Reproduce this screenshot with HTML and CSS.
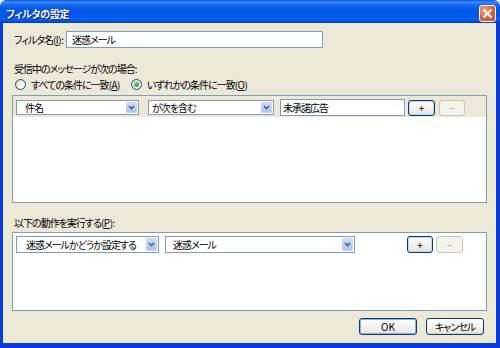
FILE: index.html
```html
<!DOCTYPE html>
<html lang="ja">
<head>
<meta charset="utf-8">
<title>フィルタの設定</title>
<link rel="stylesheet" href="styles.css">
</head>
<body>
<div class="window">
  <div class="titlebar">
    <span class="title">フィルタの設定</span>
    <span class="close"><svg width="9" height="9" viewBox="0 0 9 9"><path d="M1 1 L8 8 M8 1 L1 8" stroke="#fff" stroke-width="2" stroke-linecap="square"/></svg></span>
  </div>
  <div class="frame">
    <div class="client">
      <div class="name-row">
        <span class="name-lbl">フィルタ名<span class="ak">(<u>I</u>):</span></span>
        <div class="textbox name-box">迷惑メール</div>
      </div>
      <div class="lbl lbl1">受信中のメッセージが次の場合:</div>
      <div class="radios">
        <div class="radio r1"><span class="rb"></span><span>すべての条件に一致<span class="ak">(<u>A</u>)</span></span></div>
        <div class="radio"><span class="rb on"><span class="dot"></span></span><span>いずれかの条件に一致<span class="ak">(<u>O</u>)</span></span></div>
      </div>
      <div class="panel panel1">
        <div class="head">
          <div class="sel s11"><span class="txt">件名</span><span class="dd"><svg width="7" height="5" viewBox="0 0 7 5"><path d="M1 1 L3.5 3.5 L6 1" stroke="#4D6185" stroke-width="1.6" fill="none"/></svg></span></div>
          <div class="sel s12"><span class="txt">が次を含む</span><span class="dd"><svg width="7" height="5" viewBox="0 0 7 5"><path d="M1 1 L3.5 3.5 L6 1" stroke="#4D6185" stroke-width="1.6" fill="none"/></svg></span></div>
          <div class="textbox val-box">未承諾広告</div>
          <div class="btn small def p1">+</div>
          <div class="btn small dis">−</div>
        </div>
      </div>
      <div class="lbl lbl2">以下の動作を実行する<span class="ak">(<u>P</u>):</span></div>
      <div class="panel panel2">
        <div class="row">
          <div class="sel s21"><span class="txt">迷惑メールかどうか設定する</span><span class="dd"><svg width="7" height="5" viewBox="0 0 7 5"><path d="M1 1 L3.5 3.5 L6 1" stroke="#4D6185" stroke-width="1.6" fill="none"/></svg></span></div>
          <div class="sel s22"><span class="txt">迷惑メール</span><span class="dd"><svg width="7" height="5" viewBox="0 0 7 5"><path d="M1 1 L3.5 3.5 L6 1" stroke="#4D6185" stroke-width="1.6" fill="none"/></svg></span></div>
          <div class="btn small def p2">+</div>
          <div class="btn small dis m2">−</div>
        </div>
      </div>
      <div class="footer">
        <div class="btn big def ok">OK</div>
        <div class="btn big">キャンセル</div>
      </div>
    </div>
  </div>
</div>
</body>
</html>
```

FILE: styles.css
```css
* { box-sizing: border-box; margin: 0; padding: 0; }
html, body { width: 500px; height: 348px; overflow: hidden; background: #fff; }
body {
  font-family: "Noto Sans CJK JP", "Noto Sans", sans-serif;
  font-size: 10px;
  line-height: 12px;
  letter-spacing: -1px;
  font-feature-settings: "palt";
  color: #000;
  white-space: nowrap;
}
u { text-decoration: underline; text-underline-offset: 1px; }
.ak { letter-spacing: -0.5px; }

.window { width: 500px; height: 348px; display: flex; flex-direction: column; }

.titlebar {
  height: 23px;
  flex: none;
  display: flex;
  align-items: flex-start;
  justify-content: space-between;
  padding: 5px 4px 0 6px;
  border-radius: 6px 6px 0 0;
  background: linear-gradient(to bottom, #0A4FD8 0px, #3D8BFA 2px, #1767F0 5px, #0056E6 10px, #0057EA 16px, #0A63F2 19px, #0049D2 22px, #003EC0 23px);
}
.title {
  color: #fff;
  font-weight: bold;
  font-size: 10px;
  letter-spacing: -0.3px;
  line-height: 13px;
  margin-top: 2px;
  text-shadow: 1px 1px 0 #0A1E8C;
}
.close {
  width: 17px;
  height: 17px;
  border: 1px solid #fff;
  border-radius: 3px;
  background: radial-gradient(circle at 30% 30%, #F0A58A 0%, #E2683F 45%, #C8401B 100%);
  display: flex;
  align-items: center;
  justify-content: center;
}

.frame {
  flex: 1;
  display: flex;
  border-left: 3px solid #0A3EDC;
  border-right: 4px solid #0A3EDC;
  border-bottom: 5px solid #0A3EDC;
}
.client {
  flex: 1;
  background: #ECE9D8;
  padding: 8px 9px 0 9px;
  display: flex;
  flex-direction: column;
}

.name-row { display: flex; align-items: center; height: 17px; padding-left: 2px; }
.name-lbl { width: 52px; }
.textbox {
  height: 17px;
  border: 1px solid #7F9DB9;
  background: #fff;
  line-height: 15px;
}
.name-box { width: 257px; padding-left: 5px; }

.lbl { padding-left: 2px; height: 12px; }
.lbl1 { margin-top: 15px; }
.lbl2 { margin-top: 14px; }

.radios { margin-top: 3px; height: 13px; display: flex; align-items: center; padding-left: 3px; }
.radio { display: flex; align-items: center; gap: 5px; }
.r1 { width: 116px; }
.rb {
  width: 11px;
  height: 11px;
  flex: none;
  border-radius: 50%;
  border: 1px solid #1C5180;
  background: radial-gradient(circle at 65% 65%, #fff 0%, #F2F1EA 40%, #D5D2C4 100%);
  display: flex;
  align-items: center;
  justify-content: center;
}
.dot {
  width: 5px;
  height: 5px;
  border-radius: 50%;
  background: radial-gradient(circle at 35% 35%, #7BE07B 0%, #2DAB2D 55%, #188C18 100%);
}

.panel { border: 1px solid #7F9DB9; background: #fff; }
.panel1 { margin-top: 4px; height: 108px; }
.panel2 { margin-top: 3px; height: 79px; }

.head {
  height: 21px;
  background: #ECE9D8;
  display: flex;
  align-items: center;
  padding: 2px 0 0 3px;
}
.row { display: flex; align-items: center; padding: 3px 0 0 3px; }

.sel {
  display: flex;
  align-items: center;
  border: 1px solid #7F9DB9;
  background: #fff;
}
.sel .txt { flex: 1; min-width: 0; line-height: 12px; }
.dd {
  width: 11px;
  flex: none;
  align-self: stretch;
  margin: 1px;
  border-radius: 1px;
  background: linear-gradient(to bottom, #D2DFFC 0%, #B9CDF7 50%, #AEC5F5 100%);
  border: 1px solid #C4D4F8;
  display: flex;
  align-items: center;
  justify-content: center;
}
.s11 { width: 123px; height: 15px; margin-right: 9px; padding-left: 8px; }
.s12 { width: 126px; height: 15px; margin-right: 6px; padding-left: 3px; }
.val-box { width: 125px; margin-right: 3px; padding-left: 2px; }
.s21 { width: 143px; height: 17px; margin-right: 6px; padding-left: 9px; }
.s22 { width: 190px; height: 17px; padding-left: 7px; }

.btn {
  display: flex;
  align-items: center;
  justify-content: center;
  border: 1px solid #003C74;
  border-radius: 3px;
  letter-spacing: 0;
  background: linear-gradient(to bottom, #FFFFFF 0%, #F4F3EE 50%, #ECEAE2 85%, #D8D2C6 100%);
}
.small { height: 16px; }
.p1 { width: 27px; margin-right: 4px; }
.p2 { width: 26px; margin-left: 52px; margin-right: 3px; height: 17px; }
.dis {
  width: 26px;
  border-color: #C9C7BA;
  background: #F5F4EA;
  color: #ACA899;
}
.m2 { width: 27px; height: 17px; }
.def { box-shadow: inset 0 0 0 1px #C2D4F5; }

.footer {
  display: flex;
  justify-content: flex-end;
  gap: 9px;
  margin-top: 7px;
  padding-right: 3px;
}
.big { width: 58px; height: 17px; }
.big:last-child { letter-spacing: -1px; }
.ok { box-shadow: inset 0 0 0 1px #8FB2EE; }
```
